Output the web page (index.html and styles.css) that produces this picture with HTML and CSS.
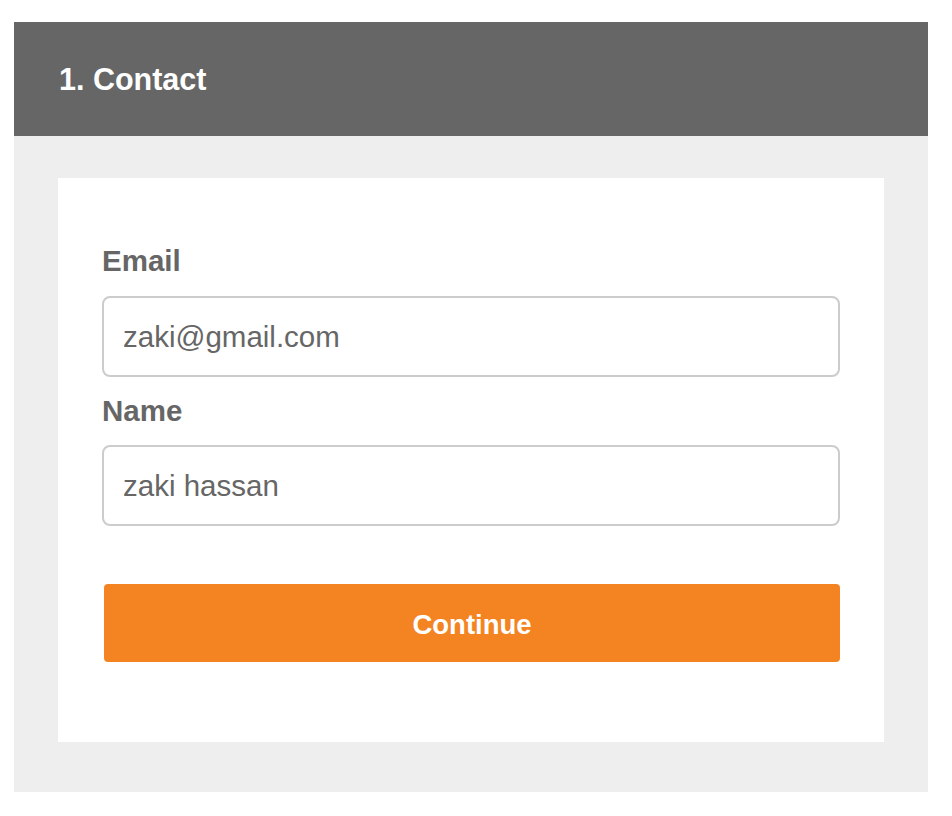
FILE: index.html
```html
<!DOCTYPE html>
<html lang="en">
<head>
<meta charset="utf-8">
<title>Contact</title>
<link rel="stylesheet" href="styles.css">
</head>
<body>
<section class="step">
  <header class="step-header">
    <h1 class="step-title">1. Contact</h1>
  </header>
  <div class="step-body">
    <form class="card">
      <label class="field-label" for="email">Email</label>
      <input class="field-input" id="email" type="text" value="zaki@gmail.com">
      <label class="field-label" for="name">Name</label>
      <input class="field-input" id="name" type="text" value="zaki hassan">
      <button class="continue-btn" type="button">Continue</button>
    </form>
  </div>
</section>
</body>
</html>
```

FILE: styles.css
```css
html, body {
  margin: 0;
  padding: 0;
  background: #ffffff;
}

body {
  font-family: "Liberation Sans", Arial, Helvetica, sans-serif;
}

.step {
  width: 914px;
  margin: 22px 0 0 14px;
}

.step-header {
  height: 114px;
  background: #666666;
  display: flex;
  align-items: center;
  padding-left: 45px;
}

.step-title {
  margin: 0;
  color: #ffffff;
  font-size: 30.5px;
  font-weight: bold;
  line-height: 36px;
}

.step-body {
  background: #eeeeee;
  padding: 42px 44px 50px 44px;
}

.card {
  background: #ffffff;
  padding: 66px 44px 80px 44px;
  display: flex;
  flex-direction: column;
  margin: 0;
}

.field-label {
  display: block;
  color: #666666;
  font-size: 29.5px;
  font-weight: bold;
  line-height: 34px;
  margin-bottom: 18px;
}

.field-label + .field-input + .field-label {
  margin-top: 17px;
  margin-bottom: 17px;
}

.field-input {
  box-sizing: border-box;
  height: 81px;
  width: 100%;
  margin: 0;
  border: 2px solid #cccccc;
  border-radius: 8px;
  padding: 0 19px;
  font-family: "Liberation Sans", Arial, Helvetica, sans-serif;
  font-size: 29.5px;
  color: #666666;
  background: #ffffff;
  outline: none;
}

.continue-btn {
  margin: 58px 0 0 2px;
  height: 78px;
  padding: 4px 0 0 0;
  border: none;
  border-radius: 4px;
  background: #f48422;
  color: #ffffff;
  font-family: "Liberation Sans", Arial, Helvetica, sans-serif;
  font-size: 27.5px;
  font-weight: bold;
  cursor: pointer;
}
```
